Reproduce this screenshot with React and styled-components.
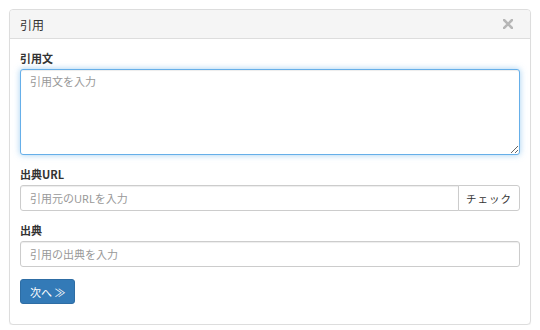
import React from 'react';
import styled, { createGlobalStyle } from 'styled-components';

const GlobalStyle = createGlobalStyle`
  html, body {
    margin: 0;
    padding: 0;
    background: #fff;
  }
  body {
    font-family: "Noto Sans", "Noto Sans CJK JP", sans-serif;
    color: #333;
  }
`;

const Page = styled.div`
  padding: 9px 9px 0 9px;
  width: 522px;
`;

const Panel = styled.div`
  border: 1px solid #ddd;
  border-radius: 4px;
  background: #fff;
  box-shadow: 0 1px 1px rgba(0, 0, 0, 0.05);
  height: 316px;
  box-sizing: border-box;
  overflow: hidden;
`;

const Heading = styled.div`
  display: flex;
  align-items: center;
  justify-content: space-between;
  height: 28px;
  padding: 0 10px;
  background: #f5f5f5;
  border-bottom: 1px solid #ddd;
  border-radius: 3px 3px 0 0;
`;

const Title = styled.h3`
  margin: 0;
  font-size: 12px;
  font-weight: normal;
  color: #333;
  font-family: "Noto Sans CJK JP", sans-serif;
`;

const Close = styled.button`
  display: flex;
  border: 0;
  background: transparent;
  padding: 0;
  margin-right: 7px;
  color: #000;
  opacity: 0.25;
  cursor: pointer;
`;

const Body = styled.form`
  padding: 12px 10px 10px;
  display: flex;
  flex-direction: column;
`;

const Group = styled.div`
  margin-bottom: 12px;
`;

const Label = styled.label`
  display: block;
  font-size: 11px;
  line-height: 14px;
  font-weight: bold;
  margin-bottom: 4px;
  font-family: "Noto Sans CJK JP", sans-serif;
`;

const fieldBase = `
  display: block;
  width: 100%;
  box-sizing: border-box;
  font-size: 11px;
  font-family: "Noto Sans", "Noto Sans CJK JP", sans-serif;
  color: #555;
  background: #fff;
  border: 1px solid #ccc;
  border-radius: 3px;
  box-shadow: inset 0 1px 1px rgba(0, 0, 0, 0.075);
  outline: none;
  &::placeholder {
    color: #999;
  }
`;

const TextArea = styled.textarea`
  ${fieldBase}
  height: 86px;
  padding: 4px 9px;
  line-height: 16px;
  resize: vertical;
  border-color: ${(p) => (p.$focused ? '#66afe9' : '#ccc')};
  box-shadow: ${(p) =>
    p.$focused
      ? 'inset 0 1px 1px rgba(0,0,0,.075), 0 0 6px rgba(102,175,233,.6)'
      : 'inset 0 1px 1px rgba(0,0,0,.075)'};
`;

const Input = styled.input`
  ${fieldBase}
  height: 26px;
  padding: 0 9px;
  ${(p) => p.$joined && 'border-radius: 3px 0 0 3px; flex: 1;'}
`;

const InputGroup = styled.div`
  display: flex;
`;

const AddonButton = styled.button`
  height: 26px;
  width: 62px;
  padding: 0;
  margin-left: -1px;
  font-size: 10.5px;
  font-family: "Noto Sans CJK JP", sans-serif;
  letter-spacing: 1px;
  color: #333;
  background: #fff;
  border: 1px solid #ccc;
  border-radius: 0 3px 3px 0;
  white-space: nowrap;
`;

const PrimaryButton = styled.button`
  align-self: flex-start;
  height: 25px;
  width: 55px;
  padding: 0 0 0 9px;
  font-size: 11px;
  font-family: "Noto Sans CJK JP", sans-serif;
  white-space: nowrap;
  color: #fff;
  background: #337ab7;
  border: 1px solid #2e6da4;
  border-radius: 3px;
  text-align: left;
`;

function CloseIcon() {
  return (
    <svg width="10" height="10" viewBox="0 0 10 10">
      <path d="M1 1 L9 9 M9 1 L1 9" stroke="currentColor" strokeWidth="2.6" strokeLinecap="square" />
    </svg>
  );
}

export default function App() {
  return (
    <>
      <GlobalStyle />
      <Page>
        <Panel>
          <Heading>
            <Title>引用</Title>
            <Close type="button" aria-label="閉じる">
              <CloseIcon />
            </Close>
          </Heading>
          <Body onSubmit={(e) => e.preventDefault()}>
            <Group>
              <Label>引用文</Label>
              <TextArea $focused autoFocus placeholder="引用文を入力" />
            </Group>
            <Group>
              <Label>出典URL</Label>
              <InputGroup>
                <Input $joined placeholder="引用元のURLを入力" />
                <AddonButton type="button">チェック</AddonButton>
              </InputGroup>
            </Group>
            <Group>
              <Label>出典</Label>
              <Input placeholder="引用の出典を入力" />
            </Group>
            <PrimaryButton type="submit">次へ ≫</PrimaryButton>
          </Body>
        </Panel>
      </Page>
    </>
  );
}
